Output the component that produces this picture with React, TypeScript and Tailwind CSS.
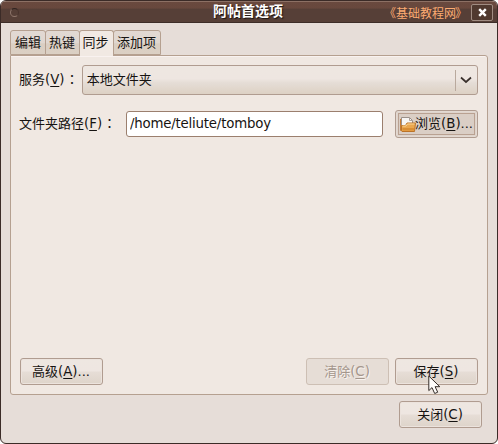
import type { ReactNode } from "react";

const button =
  "flex h-[27px] w-[83px] items-center justify-center rounded-[3px] border border-[#b09c90] bg-[linear-gradient(180deg,#eee7e1_0%,#eee6e1_48%,#e6ddd6_52%,#ded4ca_100%)] pr-px shadow-[inset_0_0_0_1px_#ece3dd]";

function Key({ children }: { children: string }) {
  return (
    <span className="text-[13.33px]">
      (<span className="underline decoration-1 underline-offset-2">{children}</span>)
    </span>
  );
}

function Colon() {
  return <span className="ml-px leading-[0] [font-family:'Noto_Sans_CJK_TC',sans-serif]" lang="zh-TW">：</span>;
}

function Tab({ children, className }: { children: ReactNode; className: string }) {
  return (
    <button
      className={`flex h-[25px] items-center justify-center rounded-t-[3px] border border-[#b5a090] bg-[linear-gradient(180deg,#e2d9d3_0%,#e0d7d0_50%,#dacec2_56%,#dbd0c4_100%)] ${className}`}
    >
      {children}
    </button>
  );
}

function FolderIcon() {
  return (
    <svg width="17" height="17" viewBox="0 0 17 17" className="shrink-0">
      <path d="M2.5 13V1.5h8l3 3V10" fill="#f7f5f3" stroke="#9b9089" />
      <path d="M10.5 1.5v3h3" fill="none" stroke="#aaa099" />
      <path d="M1.5 3v11.5h2" fill="none" stroke="#c77c33" />
      <path d="M2.5 14.5v-5h4l1.5-2.5h8.5l-1 8.5H3z" fill="#eaa74f" stroke="#bb7328" />
      <path d="M3.5 10h3.5l1.5-2h7" fill="none" stroke="#f9d594" />
      <path d="M3.5 12h11.5v2.5H3.5z" fill="#d98e34" />
    </svg>
  );
}

function Cursor() {
  return (
    <svg className="absolute top-[374px] left-[427px]" width="13" height="20" viewBox="0 0 13 20">
      <path
        d="M.8 1v14.6l3.2-3 2.7 5.9 3-1.3-2.6-5.500h4.700z"
        fill="#fffdfb"
        stroke="#332c28"
        strokeWidth="1"
      />
    </svg>
  );
}

export default function App() {
  return (
    <div className="h-[444px] w-[498px] bg-white text-[13px] leading-[18px] text-[#161311] [font-family:'DejaVu_Sans','Noto_Sans_CJK_SC',sans-serif]">
      <div className="relative flex h-[444px] w-[498px] flex-col overflow-hidden rounded-[6px] border border-[#3b2b27] bg-[#e6ddd8]">
        <header className="flex h-[22px] shrink-0 items-center border-t border-b border-t-[#8c7064] border-b-[#3d2d28] bg-[linear-gradient(180deg,#69493e_0%,#68483d_30%,#563f37_36%,#563f37_100%)]">
          <span className="ml-[9px] size-[9px] rounded-full border border-t-[#2f2420] border-r-[#49342d] border-b-[#90776c] border-l-[#8c7469]" />
          <h1 className="-mt-[3px] ml-[194px] w-[72px] text-[14px] leading-[18px] font-bold whitespace-nowrap text-white [text-shadow:1px_1px_1px_#1b1310]">
            阿帖首选项
          </h1>
          <span className="mt-[3px] ml-[99px] w-[87px] text-[12px] whitespace-nowrap text-[#fcab72]">
            《基础教程网<span className="-ml-px">》</span>
          </span>
          <button className="flex h-[17px] w-[22px] items-center justify-center rounded-[2px] border border-[#a08c82] bg-[#50392f]">
            <svg width="9" height="9" viewBox="0 0 9 9">
              <path d="M1.2 1.2 7.8 7.8M7.8 1.2 1.2 7.8" stroke="white" strokeWidth="2.4" />
            </svg>
          </button>
        </header>
        <nav className="mt-[7px] ml-[9px] flex h-[25px] items-end">
          <Tab className="w-[36px]">编辑</Tab>
          <Tab className="-ml-px w-[35px] pr-px">热键</Tab>
          <button className="z-10 -mb-px -ml-px flex h-[26px] w-[35px] items-center justify-center self-start rounded-t-[3px] border border-b-0 border-[#b5a090] bg-[#f1e9e3] pr-[2px] pb-px">
            同步
          </button>
          <Tab className="-ml-px w-[48px] pr-px">添加项</Tab>
        </nav>
        <main className="ml-[9px] flex h-[340px] w-[478px] flex-col rounded-[3px] rounded-tl-none border border-[#b5a090] bg-[#f0e8e2] pr-[9px] pl-[8px] shadow-[inset_0_1px_0_#f9f2f0]">
          <div className="mt-[9px] flex h-[30px] items-center">
            <label className="h-[18px] w-[63px] whitespace-nowrap">
              服务<Key>V</Key>
              <Colon />
            </label>
            <button className="flex h-[30px] w-[397px] items-center rounded-[3px] border border-[#b09c90] bg-[linear-gradient(180deg,#eee7e1_0%,#eee6e1_45%,#e5ddd6_60%,#ddd1c4_100%)] pl-[4px]">
              本地文件夹
              <span className="ml-auto h-[21px] w-px bg-[#b9a99d]" />
              <svg width="21" height="12" viewBox="0 0 21 12">
                <path d="M5 3.5 10 8l5-4.5" fill="none" stroke="#3a312d" strokeWidth="1.7" />
              </svg>
            </button>
          </div>
          <div className="mt-[15px] flex h-[28px] items-center">
            <label className="h-[18px] w-[107px] whitespace-nowrap">
              文件夹路径<Key>F</Key>
              <Colon />
            </label>
            <input
              className="h-[26px] w-[257px] rounded-[3px] border border-[#9b7f6e] bg-white pb-[2px] pl-[3px] text-[13.33px] tracking-[-0.2px]"
              defaultValue="/home/teliute/tomboy"
            />
            <button className="ml-[12px] flex h-[28px] w-[83px] items-center rounded-[3px] border border-[#b09c90] bg-[#dfd4cc] p-[2px] shadow-[inset_0_0_0_1px_#e3d9d1]">
              <span className="flex h-[22px] w-full items-center border border-[#b9a191] bg-[#dacec5] whitespace-nowrap">
                <FolderIcon />
                <span className="-ml-px">浏览</span>
                <Key>B</Key>...
              </span>
            </button>
          </div>
          <footer className="mt-auto mb-[9px] ml-px flex">
            <button className={button}>
              高级<Key>A</Key>...
            </button>
            <button className="ml-auto flex h-[27px] w-[83px] items-center justify-center rounded-[3px] border border-[#cdbfb4] bg-[#e6ddd6] pr-px text-[#a4968c] [text-shadow:1px_1px_0_#f8f2ee]">
              清除<Key>C</Key>
            </button>
            <button className={`${button} ml-[6px]`}>
              保存<Key>S</Key>
            </button>
          </footer>
        </main>
        <footer className="mt-[6px] ml-[398px]">
          <button className={button}>
            关闭<Key>C</Key>
          </button>
        </footer>
        <Cursor />
      </div>
    </div>
  );
}
